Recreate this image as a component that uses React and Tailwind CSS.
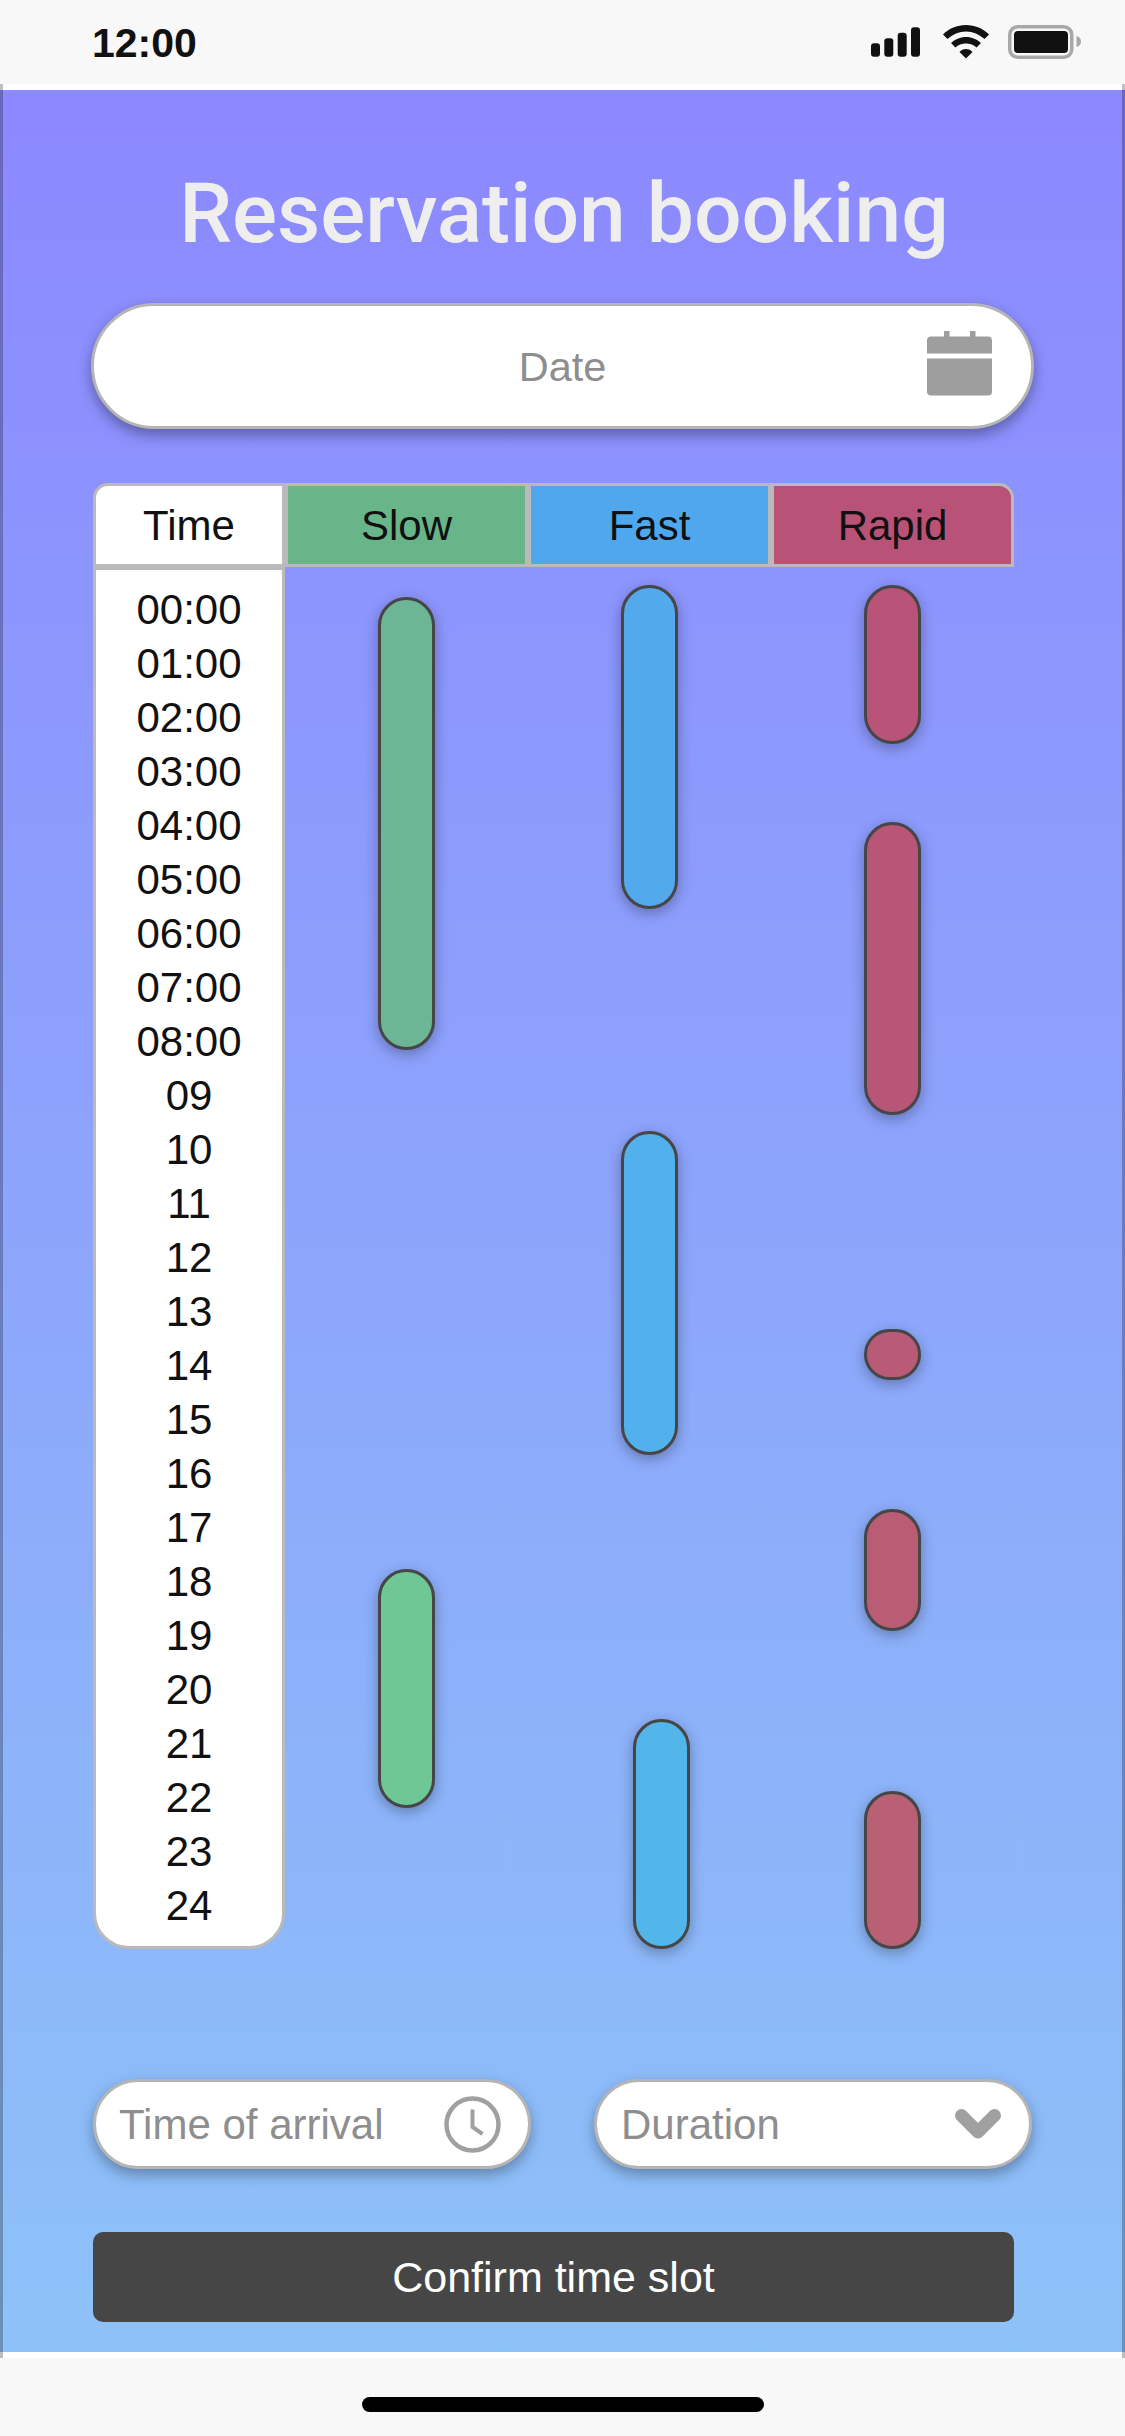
const HOURS = [
  '00:00', '01:00', '02:00', '03:00', '04:00', '05:00', '06:00', '07:00', '08:00',
  '09', '10', '11', '12', '13', '14', '15', '16', '17', '18', '19', '20', '21', '22', '23', '24',
];

const HEADERS = [
  { label: 'Slow', cls: 'bg-[#68b589]' },
  { label: 'Fast', cls: 'bg-[#4fa8ee]' },
  { label: 'Rapid', cls: 'bg-[#b95277] rounded-tr-[15px]' },
];

// slots per column, colours shift a bit as the page gradient runs down
const COLUMNS = [
  [
    'mt-[30px] h-[453px] bg-[#6db695]',
    'mt-[519px] h-[239px] bg-[#6fc796]',
  ],
  [
    'mt-[18px] h-[324px] bg-[#52a9ec]',
    'mt-[222px] h-[324px] bg-[#52b1ec]',
    'mt-[264px] h-[230px] ml-6 bg-[#52b6ea]',
  ],
  [
    'mt-[18px] h-[159px] bg-[#b95378]',
    'mt-[78px] h-[293px] bg-[#b95576]',
    'mt-[214px] h-[51px] bg-[#b95b76]',
    'mt-[129px] h-[122px] bg-[#b95c74]',
    'mt-[160px] h-[158px] bg-[#b96074]',
  ],
];

function StatusIcons() {
  return (
    <div className="flex items-start mt-[25px]">
      <svg width="49" height="34" viewBox="0 0 49 34" fill="#111">
        <rect x="0" y="18.3" width="9" height="13.4" rx="3" />
        <rect x="13.3" y="13.3" width="9" height="18.4" rx="3" />
        <rect x="26.7" y="7.7" width="9" height="24" rx="3" />
        <rect x="40" y="2.3" width="9" height="29.4" rx="3" />
      </svg>
      <svg className="ml-[23px]" width="46" height="34" viewBox="0 0 46 34" fill="#111">
        <path d="M0 9.5C6 3.5 14 0 23 0C32 0 40 3.5 46 9.5L41.5 14C36.5 9.5 30 6.5 23 6.5C16 6.5 9.5 9.5 4.5 14Z" />
        <path d="M8 18C12 14.5 17 12 23 12C29 12 34 14.5 38 18L33.5 22.5C31 20 27 18.5 23 18.5C19 18.5 15 20 12.5 22.5Z" />
        <path d="M16.5 27C18 25 20.5 24 23 24C25.5 24 28 25 29.5 27L23 33.5Z" />
      </svg>
      <svg className="ml-[19px]" width="73" height="34" viewBox="0 0 73 34">
        <rect x="1.75" y="1.75" width="62" height="30.5" rx="8" fill="none" stroke="#a8a8a8" strokeWidth="3.5" />
        <rect x="6" y="6" width="54" height="22" rx="4" fill="#111" />
        <path d="M68.5 11C71.5 11.5 73 14 73 16.5C73 19 71.5 21.5 68.5 22Z" fill="#a8a8a8" />
      </svg>
    </div>
  );
}

function CalendarIcon() {
  return (
    <svg width="65" height="65" viewBox="0 0 65 65" fill="#9e9e9e">
      <rect x="17" y="0" width="5.5" height="8" />
      <rect x="43" y="0" width="5.5" height="8" />
      <path d="M4 5.5H61A4 4 0 0 1 65 9.5V22.5H0V9.5A4 4 0 0 1 4 5.5Z" />
      <path d="M0 27.5H65V60.5A4 4 0 0 1 61 64.5H4A4 4 0 0 1 0 60.5Z" />
    </svg>
  );
}

function ClockIcon() {
  return (
    <svg width="57" height="57" viewBox="0 0 57 57" fill="none" stroke="#a0a0a0" strokeWidth="4.5">
      <circle cx="28.5" cy="28.5" r="26" />
      <path d="M28.5 13.5V31L38.5 38" strokeWidth="4" />
    </svg>
  );
}

function ChevronIcon() {
  return (
    <svg width="46" height="30" viewBox="0 0 46 30" fill="none" stroke="#a0a0a0" strokeWidth="13" strokeLinecap="round" strokeLinejoin="round">
      <path d="M6.5 6.5L23 23L39.5 6.5" />
    </svg>
  );
}

export default function App() {
  return (
    <div className="w-[1125px] h-[2436px] bg-[#f8f8f8] text-[#111] font-['Liberation_Sans',Arial,sans-serif] overflow-hidden">
      {/* Status bar */}
      <div className="h-[84px] flex justify-between pl-[92px] pr-[44px]">
        <span className="mt-[20px] text-[41px] leading-[46px] font-bold">12:00</span>
        <StatusIcons />
      </div>

      <main className="h-[2274px] pt-[82px] px-[88px] border-x-[3px] border-black/25 bg-white bg-[linear-gradient(180deg,#8c88ff,#8dc2f8)] bg-no-repeat bg-center bg-origin-border bg-[length:100%_2262px]">
        <h1 className="pl-[3px] text-center text-[84px] leading-[96px] font-medium text-[#eeeeee] font-['Roboto',sans-serif]">
          Reservation booking
        </h1>

        {/* Date field */}
        <div className="relative mt-[41px] h-[126px] flex items-center justify-center bg-white border-[3px] border-[#b5b5b5] rounded-full shadow-[0_6px_14px_rgba(0,0,0,0.35)]">
          <span className="pt-[3px] text-[41.5px] text-[#8e8e8e]">Date</span>
          <div className="absolute right-[39px] top-[25px]">
            <CalendarIcon />
          </div>
        </div>

        {/* Timetable */}
        <div className="mt-[54px] ml-[2px] grid grid-cols-[192px_243px_243px_243px]">
          <div className="h-[84px] pt-[1px] flex items-center justify-center bg-white border-[3px] border-[#bababa] rounded-tl-[15px] text-[42px]">
            Time
          </div>
          {HEADERS.map(h => (
            <div key={h.label} className={`h-[84px] pt-[1px] flex items-center justify-center border-[3px] border-[#bababa] text-[42px] ${h.cls}`}>
              {h.label}
            </div>
          ))}

          <div className="pt-[13px] pb-[13px] bg-white border-[3px] border-[#bababa] rounded-b-[36px] text-center text-[42px] leading-[54px]">
            {HOURS.map(t => (
              <div key={t}>{t}</div>
            ))}
          </div>
          {COLUMNS.map((slots, ci) => (
            <div key={ci} className="flex flex-col items-center">
              {slots.map((cls, si) => (
                <div key={si} className={`w-[57px] shrink-0 rounded-full border-[3px] border-[#464646] shadow-[0_4px_14px_rgba(0,0,0,0.3)] ${cls}`} />
              ))}
            </div>
          ))}
        </div>

        {/* Arrival and duration */}
        <div className="mt-[130px] ml-[2px] w-[939px] flex justify-between">
          <div className="w-[438px] h-[90px] pl-[23px] pr-[27px] flex items-center justify-between bg-white border-[3px] border-[#b5b5b5] rounded-full shadow-[0_6px_14px_rgba(0,0,0,0.3)]">
            <span className="text-[42px] text-[#8e8e8e]">Time of arrival</span>
            <ClockIcon />
          </div>
          <div className="w-[438px] h-[90px] pl-[24px] pr-[28px] flex items-center justify-between bg-white border-[3px] border-[#b5b5b5] rounded-full shadow-[0_6px_14px_rgba(0,0,0,0.3)]">
            <span className="text-[42px] text-[#8e8e8e]">Duration</span>
            <ChevronIcon />
          </div>
        </div>

        <button className="mt-[63px] ml-[2px] w-[921px] h-[90px] bg-[#464646] rounded-[10px] text-white text-[43px]">
          Confirm time slot
        </button>
      </main>

      {/* Home indicator */}
      <div className="h-[78px] flex justify-center pt-[39px]">
        <div className="w-[402px] h-[15px] bg-black rounded-full" />
      </div>
    </div>
  );
}
